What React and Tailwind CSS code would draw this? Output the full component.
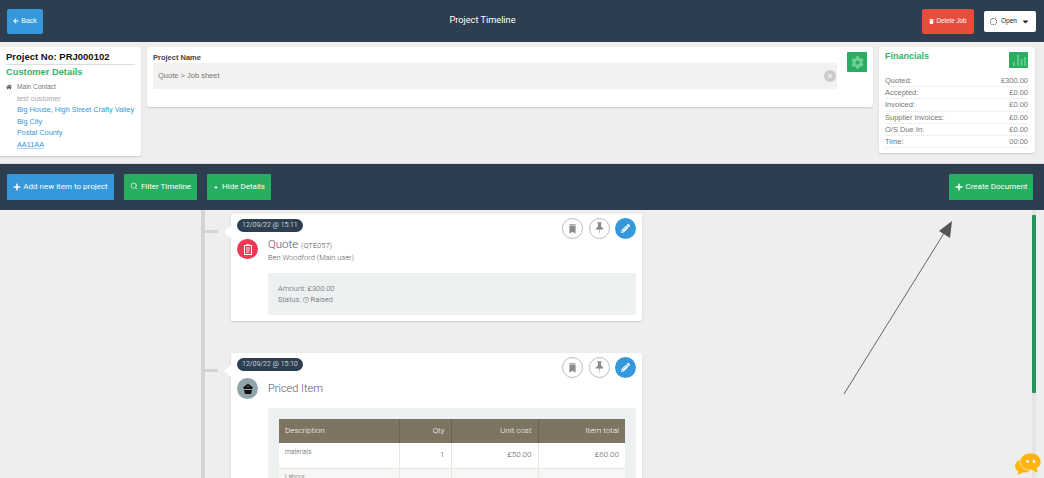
import React from 'react';
import { FaArrowLeft, FaTrash, FaCaretDown, FaHome, FaCog, FaPlus, FaCaretUp, FaPencilAlt, FaRegClock } from 'react-icons/fa';
import { Search } from 'lucide-react';

const ui = "font-['Liberation_Sans',Arial,sans-serif]";
const soft = "font-['Roboto','Lato',sans-serif]";

const FINANCIALS = [
  ['Quoted:', '£300.00'],
  ['Accepted:', '£0.00'],
  ['Invoiced:', '£0.00'],
  ['Supplier Invoices:', '£0.00'],
  ['O/S Due In:', '£0.00'],
  ['Time:', '00:00'],
];

function Bars() {
  return (
    <svg viewBox="0 0 19 16" className="w-[19px] h-[16px]">
      <g fill="#5fc98a">
        <rect x="4" y="10" width="2" height="4" />
        <rect x="8" y="3" width="2" height="11" />
        <rect x="11.5" y="7" width="2" height="7" />
        <rect x="15" y="5" width="2" height="9" />
      </g>
    </svg>
  );
}

function BookmarkIcon() {
  return (
    <svg viewBox="0 0 8 11" className="w-[7px] h-[10px]">
      <path d="M0.5 0 H7.5 V1.4 H0.5 Z M0.5 2.2 H7.5 V11 L4 8.6 L0.5 11 Z" fill="#8a8a8a" />
    </svg>
  );
}

function PinIcon() {
  return (
    <svg viewBox="0 0 10 15" className="w-[9px] h-[14px]">
      <path d="M2.6 0 H7.4 V1 L6.6 1.6 L7 5.4 C8.4 6 9.2 7 9.4 8 H5.4 L5 15 L4.6 8 H0.6 C0.8 7 1.6 6 3 5.4 L3.4 1.6 L2.6 1 Z" fill="#8a8a8a" />
    </svg>
  );
}

function TopBar() {
  return (
    <div className="h-[42px] bg-[#2c3e50] flex items-center justify-between pl-[7px] pr-[8px]">
      <button className="w-[36px] h-[25px] bg-[#3498db] rounded-[2px] text-white text-[7px] flex items-center justify-center gap-[2px]">
        <FaArrowLeft className="w-[6px] h-[6px]" /> Back
      </button>
      <div className={`${soft} flex-1 text-center text-white text-[9.2px] mb-[3px]`}>Project Timeline</div>
      <div className="flex items-center gap-[10px]">
        <button className="w-[52px] h-[25px] bg-[#e74c3c] rounded-[2px] text-white text-[6.3px] flex items-center justify-center gap-[2px]">
          <FaTrash className="w-[5px] h-[5px]" /> Delete Job
        </button>
        <button className="w-[52px] h-[21px] bg-white rounded-[2px] text-[#222] text-[6.5px] flex items-center justify-center gap-[4px]">
          <span className="w-[7px] h-[7px] rounded-full border border-dotted border-[#333]" />
          Open
          <FaCaretDown className="w-[9px] h-[9px]" />
        </button>
      </div>
    </div>
  );
}

function CustomerCard() {
  return (
    <div className="w-[141px] h-[109px] bg-white rounded-r-[3px] shadow-[0_1px_2px_rgba(0,0,0,0.15)] pl-[6px] pr-[6px] pt-[4px]">
      <div className="text-[9.5px] leading-[12px] font-bold text-[#111] border-b border-[#ddd] pb-[1px]">Project No: PRJ000102</div>
      <div className="text-[9.3px] leading-[12px] font-bold text-[#2fb36b] mt-[1px]">Customer Details</div>
      <div className="mt-[3px] text-[7.3px] leading-[11.5px]">
        <div className="flex items-center text-[#777] text-[6.6px]">
          <FaHome className="w-[6px] h-[6px] mr-[5px] text-[#555]" /> Main Contact
        </div>
        <div className="pl-[11px] text-[#aaa]">test customer</div>
        <div className="pl-[11px] text-[#3498db] whitespace-nowrap">Big House, High Street Crafty Valley</div>
        <div className="pl-[11px] text-[#3498db]">Big City</div>
        <div className="pl-[11px] text-[#3498db]">Postal County</div>
        <div className="pl-[11px] text-[#3498db] underline decoration-[#3498db]/40">AA11AA</div>
      </div>
    </div>
  );
}

function ProjectNameCard() {
  return (
    <div className="flex-1 h-[60px] bg-white rounded-[3px] shadow-[0_1px_2px_rgba(0,0,0,0.15)] pl-[6px] pr-[6px] pt-[5px] flex gap-[10px]">
      <div className="flex-1">
        <div className="text-[7.5px] leading-[11px] font-bold text-[#444]">Project Name</div>
        <div className="h-[26px] bg-[#f3f2f0] flex items-center justify-between pl-[5px] pr-[1px] text-[7.5px] text-[#777]">
          Quote &gt; Job sheet
          <span className="w-[12px] h-[12px] rounded-full bg-[#ccc] text-white text-[9px] leading-none flex items-center justify-center">×</span>
        </div>
      </div>
      <div className="w-[20px] h-[20px] bg-[#27ae60] rounded-[1px] flex items-center justify-center">
        <FaCog className="w-[13px] h-[13px] text-[#6fd097]" />
      </div>
    </div>
  );
}

function FinancialsCard() {
  return (
    <div className="w-[156px] h-[106px] bg-white rounded-[3px] shadow-[0_1px_2px_rgba(0,0,0,0.15)] pl-[6px] pr-[7px] pt-[4px]">
      <div className="flex justify-between items-start h-[23px]">
        <span className="text-[9px] leading-[11px] font-bold text-[#2fb36b]">Financials</span>
        <span className="w-[19px] h-[16px] mt-[1px] bg-[#27ae60] rounded-[1px]"><Bars /></span>
      </div>
      <div className="mt-[1px] text-[7.5px] text-[#777]">
        {FINANCIALS.map(([label, value]) => (
          <div key={label} className="h-[12.2px] leading-[12px] flex justify-between border-b border-dotted border-[#e2e2e2]">
            <span className="bg-white pr-[1px]">{label}</span>
            <span>{value}</span>
          </div>
        ))}
      </div>
    </div>
  );
}

function Toolbar() {
  const btn = `${soft} h-[26px] rounded-[1px] text-white text-[8px] flex items-center justify-center`;
  return (
    <div className="h-[46px] bg-[#2c3e50] flex items-center justify-between pl-[7px] pr-[11px]">
      <div className="flex gap-[10px]">
        <button className={`${btn} w-[107px] bg-[#3498db] gap-[2px]`}>
          <FaPlus className="w-[8px] h-[8px]" /> Add new item to project
        </button>
        <button className={`${btn} w-[73px] bg-[#27ae60] gap-[3px]`}>
          <Search className="w-[8px] h-[8px] -mt-[3px]" strokeWidth={2} /> Filter Timeline
        </button>
        <button className={`${btn} w-[64px] bg-[#27ae60] gap-[3px]`}>
          <FaCaretUp className="w-[6px] h-[6px]" /> Hide Details
        </button>
      </div>
      <button className={`${btn} w-[84px] bg-[#27ae60] gap-[3px]`}>
        <FaPlus className="w-[8px] h-[8px]" /> Create Document
      </button>
    </div>
  );
}

function CardActions() {
  const ring = 'w-[21px] h-[21px] rounded-full border border-[#bbb] flex items-center justify-center';
  return (
    <div className="absolute top-[4px] right-[6px] flex gap-[5.5px]">
      <span className={ring}><BookmarkIcon /></span>
      <span className={ring}><PinIcon /></span>
      <span className="w-[21px] h-[21px] rounded-full bg-[#3498db] text-white flex items-center justify-center">
        <FaPencilAlt className="w-[9px] h-[9px]" />
      </span>
    </div>
  );
}

function TimelineCard({ date, className, children }) {
  return (
    <div className={`relative w-[411px] bg-white rounded-[2px] shadow-[0_1px_2px_rgba(0,0,0,0.15)] ${className}`}>
      <span className="absolute left-[-26px] top-[16px] w-[13px] h-[3px] bg-[#d4d4d4]" />
      <span className="absolute left-[-7px] top-[12px] w-0 h-0 border-y-[6px] border-y-transparent border-r-[7px] border-r-white" />
      <span className="absolute left-[6px] top-[5px] h-[13px] px-[5px] rounded-full bg-[#2c3e50] text-white font-light text-[7px] leading-[13px] whitespace-nowrap">{date}</span>
      <CardActions />
      {children}
    </div>
  );
}

function PricedTable() {
  const cell = 'border-r border-[#e8e6e2] px-[6px] text-right text-[8px] font-light text-[#555]';
  return (
    <table className="w-[346px] border-collapse table-fixed bg-white">
      <thead>
        <tr className="h-[24px] bg-[#7d7461] text-white text-[8px]">
          <th className="w-[120px] font-light text-left px-[6px] border-r border-[#6a6250]">Description</th>
          <th className="w-[52px] font-light text-right px-[6px] border-r border-[#6a6250]">Qty</th>
          <th className="w-[87px] font-light text-right px-[6px] border-r border-[#6a6250]">Unit cost</th>
          <th className="font-light text-right px-[6px]">Item total</th>
        </tr>
      </thead>
      <tbody>
        <tr className="h-[25px] border-b border-[#e8e6e2]">
          <td className="border-r border-[#e8e6e2] px-[6px] pb-[5px] text-[6.5px] font-light text-[#555]">materials</td>
          <td className={cell}>1</td>
          <td className={cell}>£50.00</td>
          <td className="px-[6px] text-right text-[8px] font-light text-[#555]">£60.00</td>
        </tr>
        <tr className="h-[25px] bg-[#f8f7f5]">
          <td className="border-r border-[#e8e6e2] px-[6px] pb-[5px] text-[6.5px] font-light text-[#555]">Labour</td>
          <td className={cell}>1</td>
          <td className={cell}>£250.00</td>
          <td className="px-[6px] text-right text-[8px] font-light text-[#555]">£250.00</td>
        </tr>
      </tbody>
    </table>
  );
}

function Timeline() {
  return (
    <div className={`${soft} relative h-[268px] overflow-hidden bg-[#eee]`}>
      <div className="ml-[201px] h-full border-l-[4px] border-[#d4d4d4] pl-[26px] pt-[4px]">
        <TimelineCard date="12/09/22 @ 15:11" className="h-[107px]">
          <div className="flex pl-[6px] pt-[23px]">
            <span className="w-[21px] h-[20px] mt-[2px] rounded-full bg-[#ee3b55] flex items-center justify-center mr-[10px]">
              <svg viewBox="0 0 10 11" className="w-[10px] h-[11px]" fill="none" stroke="#fff">
                <rect x="1.5" y="1.5" width="7" height="9" strokeWidth="1" />
                <path d="M3.5 0.5 H6.5 M3 4 H7 M3 6 H7 M3 8 H6" strokeWidth="0.9" />
              </svg>
            </span>
            <div className="text-[#555]">
              <div className="text-[11.5px] font-light leading-[15px]">Quote <span className="text-[7.5px]">(QTE057)</span></div>
              <div className="text-[7.5px] leading-[9px] font-light">Ben Woodford (Main user)</div>
            </div>
          </div>
          <div className="ml-[37px] mr-[6px] mt-[11px] h-[42px] bg-[#ecf0f1] rounded-[2px] pl-[10px] pt-[10px] text-[7.5px] font-light leading-[11px] text-[#555]">
            <div>Amount: £300.00</div>
            <div className="flex items-center">Status:&nbsp;<FaRegClock className="w-[6px] h-[6px] text-[#999]" />&nbsp;Raised</div>
          </div>
        </TimelineCard>
        <TimelineCard date="12/09/22 @ 15:10" className="mt-[32px] h-[180px]">
          <div className="flex items-center pl-[6px] pt-[25px]">
            <span className="w-[21px] h-[21px] rounded-full bg-[#90a4ae] flex items-center justify-center mr-[10px]">
              <svg viewBox="0 0 12 12" className="w-[12px] h-[12px]">
                <path d="M6 0.5 L11 4.5 L10 6 H2 L1 4.5 Z M4.5 3.6 H7.5 L6 2.4 Z M2 7 H10 L9 11 H3 Z" fill="#111" fillRule="evenodd" />
              </svg>
            </span>
            <span className="text-[11px] font-light text-[#555] mt-[1px]">Priced Item</span>
          </div>
          <div className="ml-[37px] mr-[6px] mt-[9px] h-[110px] bg-[#ecf0f1] rounded-[2px] pt-[11px] pl-[11px]">
            <PricedTable />
          </div>
        </TimelineCard>
      </div>

      {/* scrollbar */}
      <div className="absolute top-0 bottom-0 right-[8px] w-[4px] bg-[#e4e4e4]">
        <div className="mt-[5px] h-[178px] bg-[#27935a] rounded-[1px]" />
      </div>

      {/* annotation arrow */}
      <svg className="absolute left-[840px] top-[8px] w-[116px] h-[180px]" viewBox="0 0 116 180">
        <line x1="4" y1="176" x2="106" y2="12" stroke="#666" strokeWidth="1" />
        <polygon points="112,3 110,20 99,13" fill="#555" />
      </svg>

      {/* chat bubble */}
      <div className="absolute left-[1014px] top-[242px]">
        <svg viewBox="0 0 28 24" className="w-[28px] h-[24px]">
          <path d="M10 7 C4 7 1 11 1 14 C1 17 3 18.5 4.5 19.5 L3.5 23 L9 20.5 C13 21 17 19 18 16 Z" fill="#ffb30f" />
          <path d="M17 1 C10 1 6 5 6 10 C6 15 10 18 17 18 L24 21.5 L23 16 C26 14.5 27 12.5 27 10 C27 5 23 1 17 1 Z" fill="#ffb30f" stroke="#eee" strokeWidth="0.7" />
          <circle cx="13.5" cy="9.5" r="1.4" fill="#fff" />
          <circle cx="20" cy="9.5" r="1.4" fill="#fff" />
        </svg>
      </div>
    </div>
  );
}

export default function App() {
  return (
    <div className={`${ui} w-[1044px] h-[478px] overflow-hidden bg-[#eee]`}>
      <TopBar />
      <div className="h-[122px] flex items-start gap-[6px] pt-[5px] pr-[9px] border-b border-[#ddd]">
        <CustomerCard />
        <ProjectNameCard />
        <FinancialsCard />
      </div>
      <Toolbar />
      <Timeline />
    </div>
  );
}
